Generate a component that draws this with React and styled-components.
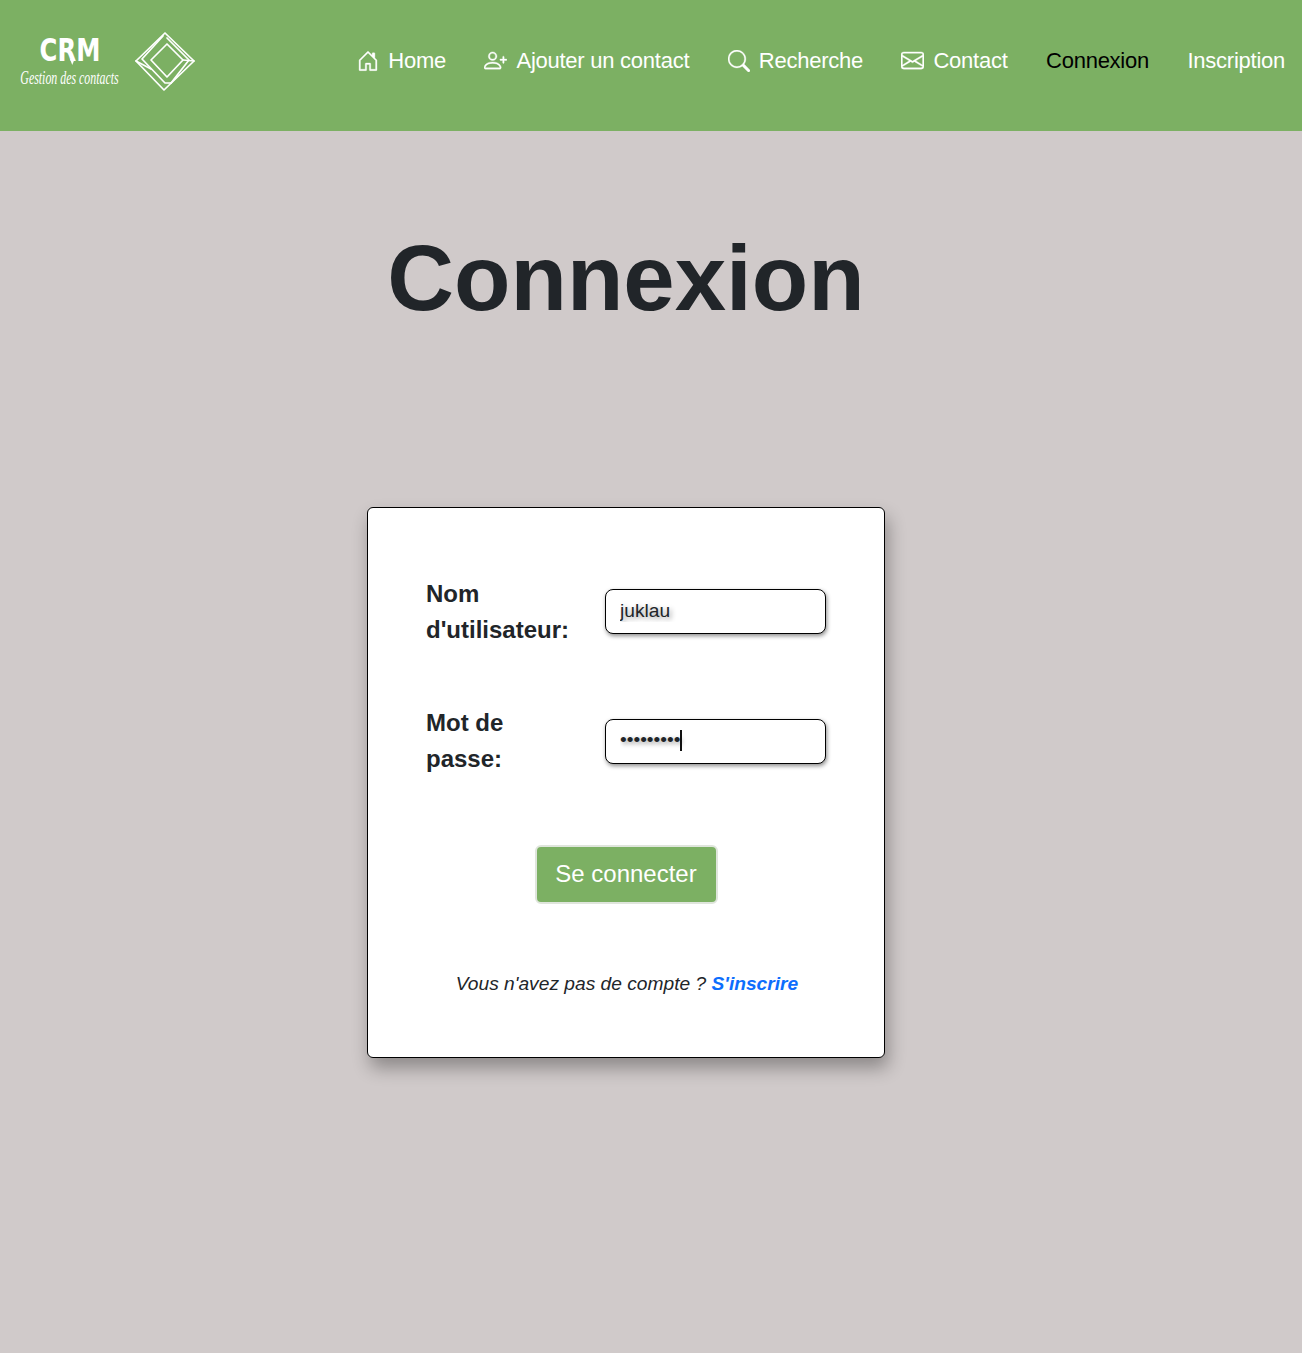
import React from 'react';
import styled, { createGlobalStyle } from 'styled-components';
import { BsHouseDoor, BsPersonPlus, BsSearch, BsEnvelope } from 'react-icons/bs';

const GlobalStyle = createGlobalStyle`
  * { box-sizing: border-box; }
  body {
    margin: 0;
    min-height: 1353px;
    background: #d0caca;
    color: #212529;
    font-family: "Liberation Sans", Arial, sans-serif;
  }
`;

const App = () => {
  return (
    <>
      <GlobalStyle />
      <Header>
        <Logo>
          <LogoText>
            <LogoTitle>CRM</LogoTitle>
            <LogoSub>Gestion des contacts</LogoSub>
          </LogoText>
          <svg width="60" height="60" viewBox="0 0 60 60" fill="none" stroke="#fff" strokeWidth="1.7" strokeLinejoin="round" strokeLinecap="round">
            <path d="M30 1 L59 29 L29 58 L1 29 Z" />
            <path d="M28 4 L7 27 L30 51 L36 51" />
            <path d="M32 6 L54 28 L36 51" />
            <path d="M32 12 L16 28 L32 45 L48 28 Z" />
            <path d="M1 29 L16 37" />
            <path d="M48 28 L59 29" />
          </svg>
        </Logo>
        <Nav>
          <NavLink href="#"><BsHouseDoor size={22} />Home</NavLink>
          <NavLink href="#"><BsPersonPlus size={23} />Ajouter un contact</NavLink>
          <NavLink href="#"><BsSearch size={22} />Recherche</NavLink>
          <NavLink href="#"><BsEnvelope size={23} />Contact</NavLink>
          <NavLink href="#" $active>Connexion</NavLink>
          <NavLink href="#">Inscription</NavLink>
        </Nav>
      </Header>
      <Main>
        <Title>Connexion</Title>
        <Card>
          <Row>
            <Label>Nom d'utilisateur:</Label>
            <InputWrap>
              <Input type="text" defaultValue="juklau" />
            </InputWrap>
          </Row>
          <Row>
            <Label>Mot de passe:</Label>
            <InputWrap>
              <Input type="password" defaultValue="123456789" />
              <Caret />
            </InputWrap>
          </Row>
          <Submit type="button">Se connecter</Submit>
          <Footnote>Vous n'avez pas de compte ? <SignUp href="#">S'inscrire</SignUp></Footnote>
        </Card>
      </Main>
    </>
  );
};

const Header = styled.header`
  height: 131px;
  background: #7cb063;
  display: flex;
  align-items: center;
  justify-content: space-between;
  padding: 0 17px 10px 20px;
`;

const Logo = styled.div`
  display: flex;
  align-items: center;
  gap: 16px;
  margin-top: 3px;
`;

const LogoText = styled.div`
  width: 99px;
  display: flex;
  flex-direction: column;
  align-items: center;
  color: #fff;
`;

const LogoTitle = styled.div`
  position: relative;
  margin-bottom: 4px;
  font-family: "DejaVu Sans", sans-serif;
  font-weight: 700;
  font-size: 32px;
  line-height: 28px;
  transform: scaleX(0.76);

  &::after {
    content: '';
    position: absolute;
    right: 34px;
    bottom: -1px;
    border-left: 3px solid transparent;
    border-right: 3px solid transparent;
    border-top: 6px solid #fff;
  }
`;

const LogoSub = styled.div`
  font-family: "Liberation Serif", serif;
  font-style: italic;
  font-size: 18px;
  line-height: 20px;
  white-space: nowrap;
  transform: scaleX(0.66);
`;

const Nav = styled.nav`
  display: flex;
  align-items: center;
  gap: 38.5px;
`;

const NavLink = styled.a`
  display: flex;
  align-items: center;
  gap: 9px;
  font-size: 22px;
  letter-spacing: -0.25px;
  text-decoration: none;
  color: ${p => (p.$active ? '#000' : '#fff')};

  svg {
    stroke: currentColor;
    stroke-width: 0.25px;
  }
`;

const Main = styled.main`
  display: flex;
  flex-direction: column;
  align-items: center;
  padding: 92px 50px 0 0;
`;

const Title = styled.h1`
  margin: 0 0 174px;
  font-size: 92.4px;
  line-height: 110px;
  font-weight: 700;
`;

const Card = styled.form`
  width: 518px;
  height: 551px;
  padding: 67.5px 58px 0;
  background: #fff;
  border: 1px solid #000;
  border-radius: 6px;
  box-shadow: 3px 10px 18px rgba(0, 0, 0, 0.32);
  display: flex;
  flex-direction: column;
  align-items: center;
`;

const Row = styled.div`
  width: 100%;
  display: grid;
  grid-template-columns: 179px 221px;
  align-items: center;
  margin-bottom: 57.5px;
`;

const Label = styled.label`
  max-width: 150px;
  font-size: 24px;
  line-height: 36px;
  font-weight: 700;
`;

const InputWrap = styled.div`
  position: relative;
`;

const Input = styled.input`
  display: block;
  width: 221px;
  height: 45px;
  padding: 0 14px 2px;
  border: 1px solid #000;
  border-radius: 8px;
  background: #fff;
  box-shadow: 1px 2px 4px rgba(0, 0, 0, 0.45);
  color: #212529;
  font-family: "Liberation Sans", Arial, sans-serif;
  font-size: 19.2px;
  text-shadow: 2px 2px 5px rgba(0, 0, 0, 0.4);
  outline: none;
`;

const Caret = styled.span`
  position: absolute;
  left: 75px;
  top: 11px;
  width: 2px;
  height: 21px;
  background: #111;
`;

const Submit = styled.button`
  flex: none;
  width: 183px;
  height: 59px;
  margin-top: 10px;
  background: #7cb063;
  border: 2px solid #dfe5dc;
  border-radius: 6px;
  color: #fff;
  font-family: "Liberation Sans", Arial, sans-serif;
  font-size: 24px;
`;

const Footnote = styled.p`
  margin: 68.5px 0 0 2px;
  font-size: 19.2px;
  line-height: 24px;
  font-style: italic;
  white-space: nowrap;
`;

const SignUp = styled.a`
  color: #0d6efd;
  font-weight: 700;
  text-decoration: none;
`;

export default App;
